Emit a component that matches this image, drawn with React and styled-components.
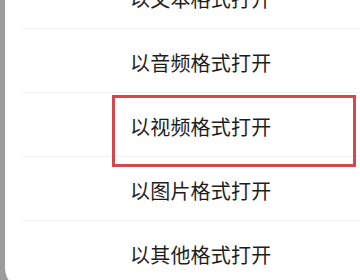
import React from 'react';
import styled, { createGlobalStyle } from 'styled-components';

const GlobalStyle = createGlobalStyle`
    html, body {
        margin: 0;
        padding: 0;
        width: 360px;
        height: 280px;
        overflow: hidden;
        background: #9c9c9c;
    }
`;

const Sheet = styled.div`
    position: relative;
    margin-left: 5px;
    height: 290px;
    background: #ffffff;
    border-bottom-left-radius: 22px;
    overflow: hidden;
`;

const List = styled.ul`
    list-style: none;
    margin: -35px 0 0 0;
    padding: 0;
`;

const Item = styled.li`
    height: 64px;
    display: flex;
    align-items: center;
    box-sizing: border-box;
    margin-left: 18px;
    padding: 3px 0 0 107px;
    font-family: "Noto Sans CJK SC", "Noto Sans", sans-serif;
    font-size: 20px;
    letter-spacing: 0.2px;
    color: #1e1e1e;
    border-bottom: ${({ $last }) => ($last ? 'none' : '1px solid #f3f3f3')};
`;

const Highlight = styled.div`
    position: absolute;
    left: 107px;
    top: 95px;
    width: 244px;
    height: 72px;
    box-sizing: border-box;
    border: 3px solid #d6474b;
    pointer-events: none;
`;

const options = [
    '以文本格式打开',
    '以音频格式打开',
    '以视频格式打开',
    '以图片格式打开',
    '以其他格式打开',
];

const App = () => (
    <>
        <GlobalStyle />
        <Sheet>
            <List>
                {options.map((label, i) => (
                    <Item key={label} $last={i === options.length - 1}>
                        {label}
                    </Item>
                ))}
            </List>
            <Highlight />
        </Sheet>
    </>
);

export default App;
